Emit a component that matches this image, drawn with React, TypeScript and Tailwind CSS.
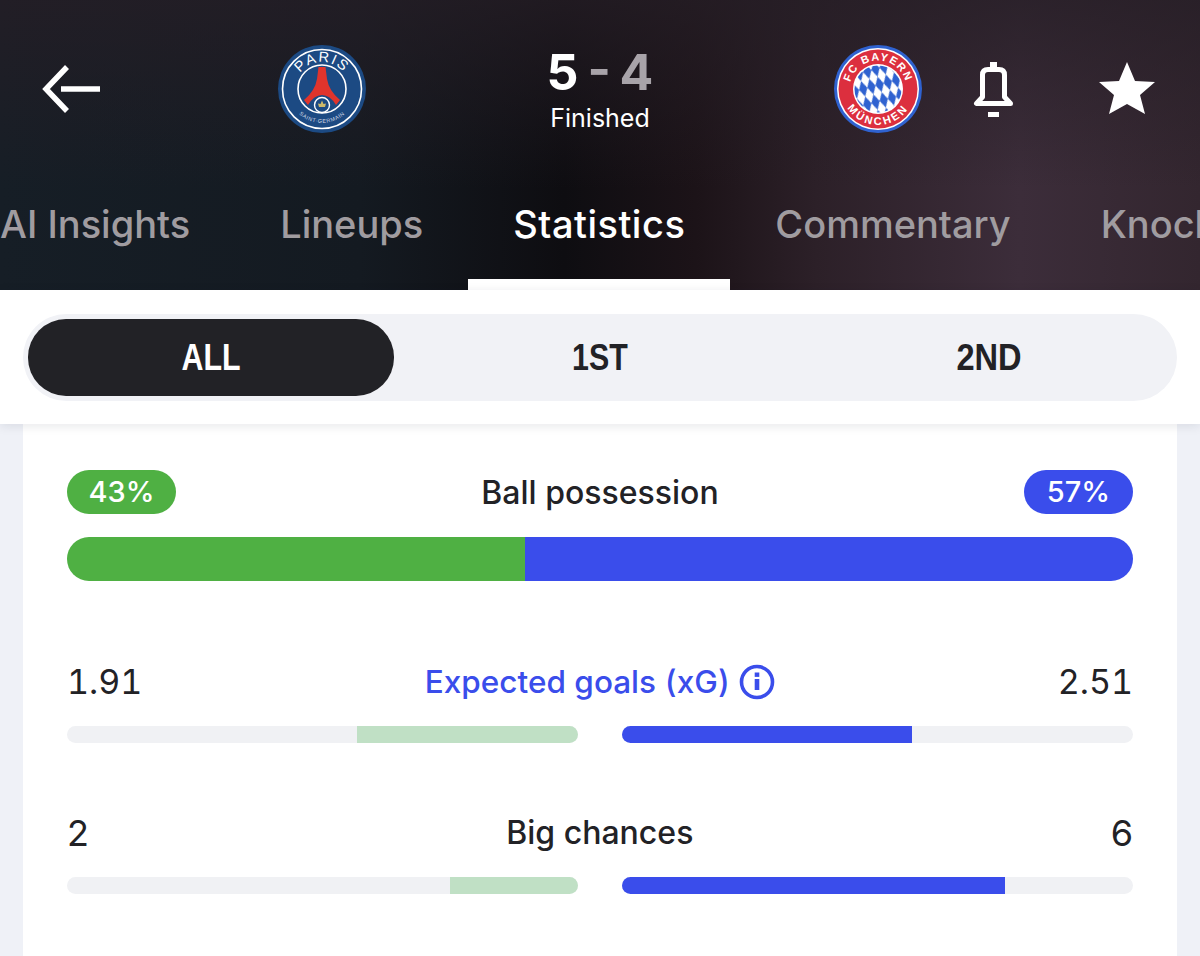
import React from "react";

const BLUE = "#3a4deb";

function BackArrow() {
  return (
    <svg width="64" height="58" viewBox="0 0 64 58" fill="none" stroke="white" strokeWidth="5.5">
      <polyline points="27,7 6,29 27,51" strokeLinejoin="miter" />
      <line x1="21" y1="29" x2="60" y2="29" />
    </svg>
  );
}

function PsgLogo() {
  return (
    <svg width="88" height="88" viewBox="0 0 88 88">
      <defs>
        <path id="psgTop" d="M 17 44 A 27 27 0 0 1 71 44" />
        <path id="psgBottom" d="M 10 44 A 34 34 0 0 0 78 44" />
      </defs>
      <circle cx="44" cy="44" r="44" fill="#1c4a83" />
      <circle cx="44" cy="44" r="39.5" fill="none" stroke="white" strokeWidth="1.6" />
      <circle cx="44" cy="44" r="24" fill="#1c4a83" stroke="white" strokeWidth="1.6" />
      <text fontFamily="'Liberation Sans', sans-serif" fontSize="14.5" fill="white" letterSpacing="1.6">
        <textPath href="#psgTop" startOffset="50%" textAnchor="middle">PARIS</textPath>
      </text>
      <text fontFamily="'Liberation Sans', sans-serif" fontSize="5.4" fill="#d7dde8" letterSpacing="0.6">
        <textPath href="#psgBottom" startOffset="50%" textAnchor="middle">SAINT-GERMAIN</textPath>
      </text>
      <path d="M40.5 22 H47.5 L49 34 Q51 46 62 55 L58 60 Q52 50 44 50 Q36 50 30 60 L26 55 Q37 46 39 34 Z" fill="#e0342c" />
      <circle cx="44" cy="60" r="7.5" fill="#1c4a83" stroke="white" strokeWidth="1.4" />
      <path d="M44 55.5 L45.5 59 L48 58.5 L47 62 H41 L40 58.5 L42.5 59 Z" fill="#cdb96a" />
    </svg>
  );
}

function BayernLogo() {
  return (
    <svg width="88" height="88" viewBox="0 0 88 88">
      <defs>
        <path id="fcbTop" d="M 15.5 44 A 28.5 28.5 0 0 1 72.5 44" />
        <path id="fcbBottom" d="M 8 44 A 36 36 0 0 0 80 44" />
        <clipPath id="fcbClip">
          <circle cx="44" cy="44" r="23.5" />
        </clipPath>
        <pattern id="fcbDiamonds" width="8.5" height="16" patternUnits="userSpaceOnUse" patternTransform="rotate(-15 44 44)">
          <rect width="8.5" height="16" fill="white" />
          <polygon points="4.25,0 8.5,8 4.25,16 0,8" fill="#2f62d0" />
        </pattern>
      </defs>
      <circle cx="44" cy="44" r="44" fill="#2f62d0" />
      <circle cx="44" cy="44" r="41" fill="white" />
      <circle cx="44" cy="44" r="39.5" fill="#dc2f3e" />
      <circle cx="44" cy="44" r="25" fill="white" />
      <rect x="20" y="20" width="48" height="48" fill="url(#fcbDiamonds)" clipPath="url(#fcbClip)" />
      <text fontFamily="'Liberation Sans', sans-serif" fontWeight="700" fontSize="11" fill="white" letterSpacing="1.4">
        <textPath href="#fcbTop" startOffset="50%" textAnchor="middle">FC BAYERN</textPath>
      </text>
      <text fontFamily="'Liberation Sans', sans-serif" fontWeight="700" fontSize="11" fill="white" letterSpacing="2.4">
        <textPath href="#fcbBottom" startOffset="50%" textAnchor="middle">MÜNCHEN</textPath>
      </text>
    </svg>
  );
}

function Bell() {
  return (
    <svg width="41" height="58" viewBox="0 0 41 58" fill="none">
      <rect x="17" y="2" width="7" height="7" fill="white" />
      <path d="M3.5 43.5 H37.5 L31.5 37 V15 Q31.5 9.5 26 9.5 H15 Q9.5 9.5 9.5 15 V37 Z" stroke="white" strokeWidth="5" strokeLinejoin="round" />
      <rect x="15" y="52" width="11" height="5" fill="white" />
    </svg>
  );
}

function Star() {
  return (
    <svg width="56" height="52" viewBox="0 0 56 52">
      <polygon points="28,0 36,19 56,20 41,33 46,52 28,42 10,52 15,33 0,20 20,19" fill="white" />
    </svg>
  );
}

function InfoIcon() {
  return (
    <svg width="36" height="36" viewBox="0 0 36 36" fill="none">
      <circle cx="18" cy="18" r="15.5" stroke={BLUE} strokeWidth="3.6" />
      <rect x="15.7" y="15" width="4.6" height="11" fill={BLUE} />
      <rect x="15.7" y="8.5" width="4.6" height="4.4" fill={BLUE} />
    </svg>
  );
}

const tabs = ["AI Insights", "Lineups", "Statistics", "Commentary", "Knockout"];

function Tabs() {
  return (
    <div className="flex h-[172px] overflow-hidden -ml-[45px]">
      {tabs.map((t) => (
        <div
          key={t}
          className={`relative shrink-0 px-[45px] pt-[84px] text-[38px] leading-[44px] font-medium ${
            t === "Statistics" ? "text-white tracking-[0.5px]" : "text-[#a09ca0]"
          }`}
        >
          {t}
          {t === "Statistics" && <div className="absolute left-0 right-0 bottom-0 h-[11px] bg-white" />}
        </div>
      ))}
    </div>
  );
}

function Segments() {
  return (
    <div className="relative z-10 h-[134px] bg-white px-[23px] pt-[24px] shadow-[0_2px_10px_rgba(20,25,50,0.1)]">
      <div className="flex h-[87px] items-center rounded-[44px] bg-[#f1f2f6] px-[5px]">
        <div className="flex h-[77px] w-[366px] items-center justify-center rounded-[38px] bg-[#222226] font-['Liberation_Sans',sans-serif] text-[37px] font-bold text-white">
          <span className="inline-block scale-x-[0.82]">ALL</span>
        </div>
        <div className="flex h-[77px] flex-1 items-center justify-center font-['Liberation_Sans',sans-serif] text-[37px] font-bold">
          <span className="inline-block scale-x-[0.82]">1ST</span>
        </div>
        <div className="flex h-[77px] w-[366px] items-center justify-center font-['Liberation_Sans',sans-serif] text-[37px] font-bold">
          <span className="inline-block scale-x-[0.88]">2ND</span>
        </div>
      </div>
    </div>
  );
}

function StatBars({ left, right }: { left: number; right: number }) {
  return (
    <div className="mt-[24px] flex justify-between">
      <div className="flex h-[17px] w-[511px] justify-end overflow-hidden rounded-full bg-[#f0f1f4]">
        <div className="h-full bg-[#c0e0c5]" style={{ width: `${left}%` }} />
      </div>
      <div className="h-[17px] w-[511px] overflow-hidden rounded-full bg-[#f0f1f4]">
        <div className="h-full bg-[#3a4deb]" style={{ width: `${right}%` }} />
      </div>
    </div>
  );
}

export default function App() {
  return (
    <div className="h-[956px] w-[1200px] overflow-hidden bg-[#eff1f7] font-['Inter',sans-serif] text-[#222226]">
      {/* Header */}
      <div className="h-[290px] bg-[linear-gradient(to_bottom,rgba(38,30,38,0.75)_0%,rgba(38,30,38,0)_65%),linear-gradient(90deg,#161e26_0%,#141a21_30%,#0e0d11_47%,#1c1318_58%,#2c2028_68%,#3c2d3a_85%,#33262f_100%)]">
        <div className="flex h-[118px] items-center pt-[60px]">
          <div className="ml-[40px] w-[64px]">
            <BackArrow />
          </div>
          <div className="ml-[174px]">
            <PsgLogo />
          </div>
          <div className="ml-[134px] flex w-[200px] flex-col items-center">
            <div className="mt-[3px] text-[50px] font-bold leading-[50px] text-white [word-spacing:-3px]">
              5 <span className="text-[#a8a3a9]">- 4</span>
            </div>
            <div className="mt-[5px] text-[25px] leading-[32px] text-white">Finished</div>
          </div>
          <div className="ml-[134px]">
            <BayernLogo />
          </div>
          <div className="ml-[51px]">
            <Bell />
          </div>
          <div className="ml-[85px] -mt-[2px]">
            <Star />
          </div>
        </div>
        <Tabs />
      </div>

      <Segments />

      {/* Stats card */}
      <div className="mx-[23px] h-[532px] bg-white px-[44px] pt-[46px]">
        <div className="flex h-[44px] items-center justify-between">
          <div className="flex h-[44px] w-[109px] items-center justify-center rounded-full bg-[#4fb043] text-[29px] font-medium text-white">43%</div>
          <div className="pt-[2px] text-[32px] font-medium">Ball possession</div>
          <div className="flex h-[44px] w-[109px] items-center justify-center rounded-full bg-[#3a4deb] text-[29px] font-medium text-white">57%</div>
        </div>
        <div className="mt-[23px] flex h-[44px] overflow-hidden rounded-full">
          <div className="w-[43%] bg-[#4fb043]" />
          <div className="flex-1 bg-[#3a4deb]" />
        </div>

        <div className="mt-[81px] flex h-[40px] items-center justify-between text-[34px] leading-[40px] tabular-nums">
          <span>1.91</span>
          <div className="flex items-center gap-[9px] text-[31.5px] font-medium text-[#3a4deb]">
            Expected goals (xG)
            <InfoIcon />
          </div>
          <span>2.51</span>
        </div>
        <StatBars left={43.2} right={56.8} />

        <div className="mt-[70px] flex h-[40px] items-center justify-between text-[36px] leading-[40px]">
          <span>2</span>
          <span className="text-[32px] font-medium">Big chances</span>
          <span>6</span>
        </div>
        <StatBars left={25} right={75} />
      </div>
    </div>
  );
}
